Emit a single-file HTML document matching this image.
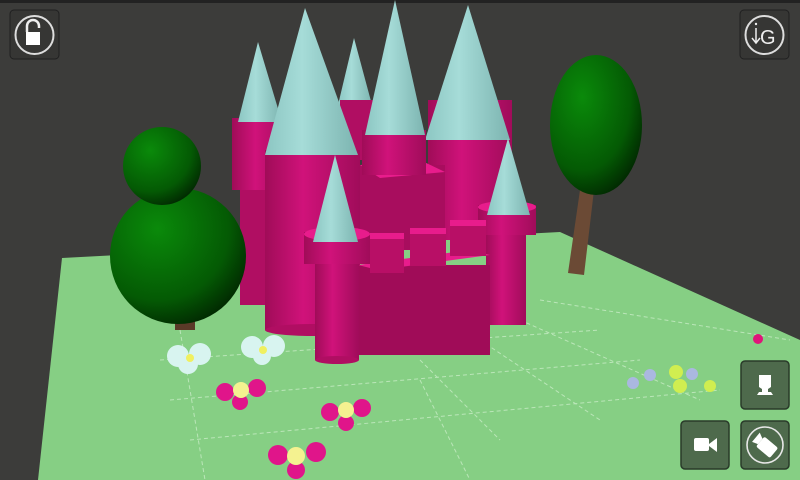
<!DOCTYPE html>
<html><head><style>
html,body{margin:0;padding:0;background:#3c3c3a;width:800px;height:480px;overflow:hidden}
svg{display:block}
</style></head><body>
<svg width="800" height="480" viewBox="0 0 800 480" xmlns="http://www.w3.org/2000/svg">
<defs>
<radialGradient id="tg" cx="0.35" cy="0.3" r="0.75"><stop offset="0" stop-color="#0a8a0a"/><stop offset="0.7" stop-color="#045a04"/><stop offset="1" stop-color="#012a01"/></radialGradient>
<linearGradient id="cone" x1="0" x2="1"><stop offset="0" stop-color="#8cc6c2"/><stop offset="0.4" stop-color="#a6dcd8"/><stop offset="1" stop-color="#7cb4b0"/></linearGradient>
<linearGradient id="cyl" x1="0" x2="1"><stop offset="0" stop-color="#a00c58"/><stop offset="0.4" stop-color="#d0127a"/><stop offset="1" stop-color="#a00c5a"/></linearGradient>
</defs>
<rect width="800" height="480" fill="#3c3c3a"/>
<rect width="800" height="3" fill="#222"/>
<!-- ground -->
<polygon points="62,258 560,232 800,340 800,480 38,480" fill="#86cf84"/>
<g stroke="#c8ecc6" stroke-width="1" stroke-dasharray="4,3" fill="none" opacity="0.8">
<line x1="180" y1="330" x2="205" y2="480"/><line x1="420" y1="360" x2="500" y2="440"/>
<line x1="480" y1="340" x2="600" y2="420"/><line x1="520" y1="320" x2="700" y2="400"/>
<line x1="170" y1="400" x2="640" y2="360"/><line x1="190" y1="440" x2="720" y2="390"/>
<line x1="160" y1="360" x2="600" y2="330"/><line x1="420" y1="380" x2="470" y2="480"/>
<line x1="540" y1="300" x2="790" y2="340"/>
</g>
<!-- right tree -->
<polygon points="580,190 594,190 584,275 568,273" fill="#6b4a35"/>
<ellipse cx="596" cy="125" rx="46" ry="70" fill="url(#tg)"/>
<!-- castle back -->
<polygon points="354,38 338,105 372,105" fill="url(#cone)"/>
<rect x="240" y="185" width="52" height="120" fill="#b00e62"/>
<rect x="232" y="118" width="58" height="72" fill="url(#cyl)"/>
<polygon points="258,42 238,122 282,122" fill="url(#cone)"/>
<rect x="340" y="100" width="35" height="60" fill="#b00e62"/>
<rect x="428" y="100" width="84" height="140" fill="url(#cyl)"/>
<polygon points="468,5 425,140 510,140" fill="url(#cone)"/>
<rect x="265" y="150" width="95" height="180" fill="url(#cyl)"/>
<ellipse cx="312" cy="330" rx="47" ry="6" fill="#b00e62"/>
<polygon points="305,8 265,155 358,155" fill="url(#cone)"/>
<rect x="360" y="165" width="85" height="85" fill="#a80d5e"/>
<polygon points="360,165 420,160 445,172 380,178" fill="#e81c8c"/>
<rect x="362" y="130" width="64" height="45" fill="url(#cyl)"/>
<polygon points="395,0 365,135 425,135" fill="url(#cone)"/>
<!-- right turret -->
<rect x="486" y="225" width="40" height="100" fill="url(#cyl)"/>
<rect x="478" y="205" width="58" height="30" fill="url(#cyl)"/>
<ellipse cx="507" cy="207" rx="29" ry="6" fill="#e81c8c"/>
<polygon points="508,138 487,215 530,215" fill="url(#cone)"/>
<!-- front wall -->
<rect x="358" y="265" width="132" height="90" fill="#a00c58"/>
<polygon points="358,265 470,250 490,255 378,270" fill="#e81c8c"/>
<rect x="370" y="235" width="34" height="38" fill="#b80f66"/><rect x="370" y="233" width="34" height="6" fill="#e81c8c"/>
<rect x="410" y="230" width="36" height="36" fill="#b80f66"/><rect x="410" y="228" width="36" height="6" fill="#e81c8c"/>
<rect x="450" y="222" width="36" height="34" fill="#b80f66"/><rect x="450" y="220" width="36" height="6" fill="#e81c8c"/>
<!-- front left turret -->
<rect x="315" y="255" width="44" height="105" fill="url(#cyl)"/>
<ellipse cx="337" cy="360" rx="22" ry="4" fill="#b00e62"/>
<rect x="304" y="232" width="66" height="32" fill="url(#cyl)"/>
<ellipse cx="337" cy="234" rx="33" ry="7" fill="#e81c8c"/>
<polygon points="335,155 313,242 358,242" fill="url(#cone)"/>
<!-- left tree -->
<rect x="175" y="295" width="20" height="35" fill="#5a3a28"/>
<circle cx="178" cy="256" r="68" fill="url(#tg)"/>
<circle cx="162" cy="166" r="39" fill="url(#tg)"/>
<!-- flowers -->
<g fill="#d8f4f0"><circle cx="178" cy="356" r="11"/><circle cx="200" cy="354" r="11"/><circle cx="188" cy="364" r="10"/><circle cx="252" cy="347" r="11"/><circle cx="274" cy="346" r="11"/><circle cx="262" cy="356" r="9"/></g>
<circle cx="190" cy="358" r="4" fill="#f0f060"/><circle cx="263" cy="350" r="4" fill="#f0f060"/>
<g fill="#e0158a"><circle cx="225" cy="392" r="9"/><circle cx="257" cy="388" r="9"/><circle cx="240" cy="402" r="8"/><circle cx="330" cy="412" r="9"/><circle cx="362" cy="408" r="9"/><circle cx="346" cy="423" r="8"/><circle cx="278" cy="455" r="10"/><circle cx="316" cy="452" r="10"/><circle cx="296" cy="470" r="9"/></g>
<circle cx="241" cy="390" r="8" fill="#f4f290"/><circle cx="346" cy="410" r="8" fill="#f4f290"/><circle cx="296" cy="456" r="9" fill="#f4f290"/>
<g fill="#aab8e0"><circle cx="633" cy="383" r="6"/><circle cx="650" cy="375" r="6"/><circle cx="692" cy="374" r="6"/></g>
<g fill="#d0ee50"><circle cx="676" cy="372" r="7"/><circle cx="680" cy="386" r="7"/><circle cx="710" cy="386" r="6"/></g>
<circle cx="758" cy="339" r="5" fill="#e0157a"/>
<!-- buttons -->
<g>
<rect x="10" y="10" width="49" height="49" rx="4" fill="#363634" stroke="#202020"/>
<circle cx="34.5" cy="35" r="19" fill="none" stroke="#ddd" stroke-width="2"/>
<path d="M27 32 v-6 a6 6 0 0 1 12 0 v2" fill="none" stroke="#eee" stroke-width="2.5"/>
<rect x="26" y="32" width="14" height="13" fill="#fff"/>
<rect x="740" y="10" width="49" height="49" rx="4" fill="#363634" stroke="#202020"/>
<circle cx="764.5" cy="35" r="19" fill="none" stroke="#ddd" stroke-width="2"/>
<text x="760" y="44" font-family="Liberation Sans,sans-serif" font-size="20" fill="#eee">G</text>
<path d="M756 28 v14 M752 38 l4 5 l4 -5" fill="none" stroke="#eee" stroke-width="1.5"/>
<circle cx="756" cy="24" r="1.2" fill="#eee"/>
</g>
<g fill="#4e6a4c" stroke="#2a3a2a" stroke-width="1.5">
<rect x="741" y="361" width="48" height="48" rx="4"/>
<rect x="681" y="421" width="48" height="48" rx="4"/>
<rect x="741" y="421" width="48" height="48" rx="4"/>
</g>
<path d="M759 375 h12 v12 l-3 2 v3 h3 l2 3 h-16 l2 -3 h3 v-3 l-3 -2 z" fill="#fff"/>
<rect x="694" y="438" width="15" height="13" rx="2" fill="#fff"/><polygon points="709,444 717,438 717,452 709,446" fill="#fff"/>
<circle cx="765" cy="445" r="18" fill="none" stroke="#e8e8e8" stroke-width="1.6"/>
<g transform="rotate(40 766 447)"><rect x="758" y="440" width="18" height="13" rx="2" fill="#fff"/><polygon points="758,443 752,440 752,452 758,450" fill="#fff"/></g>
</svg>
</body></html>
